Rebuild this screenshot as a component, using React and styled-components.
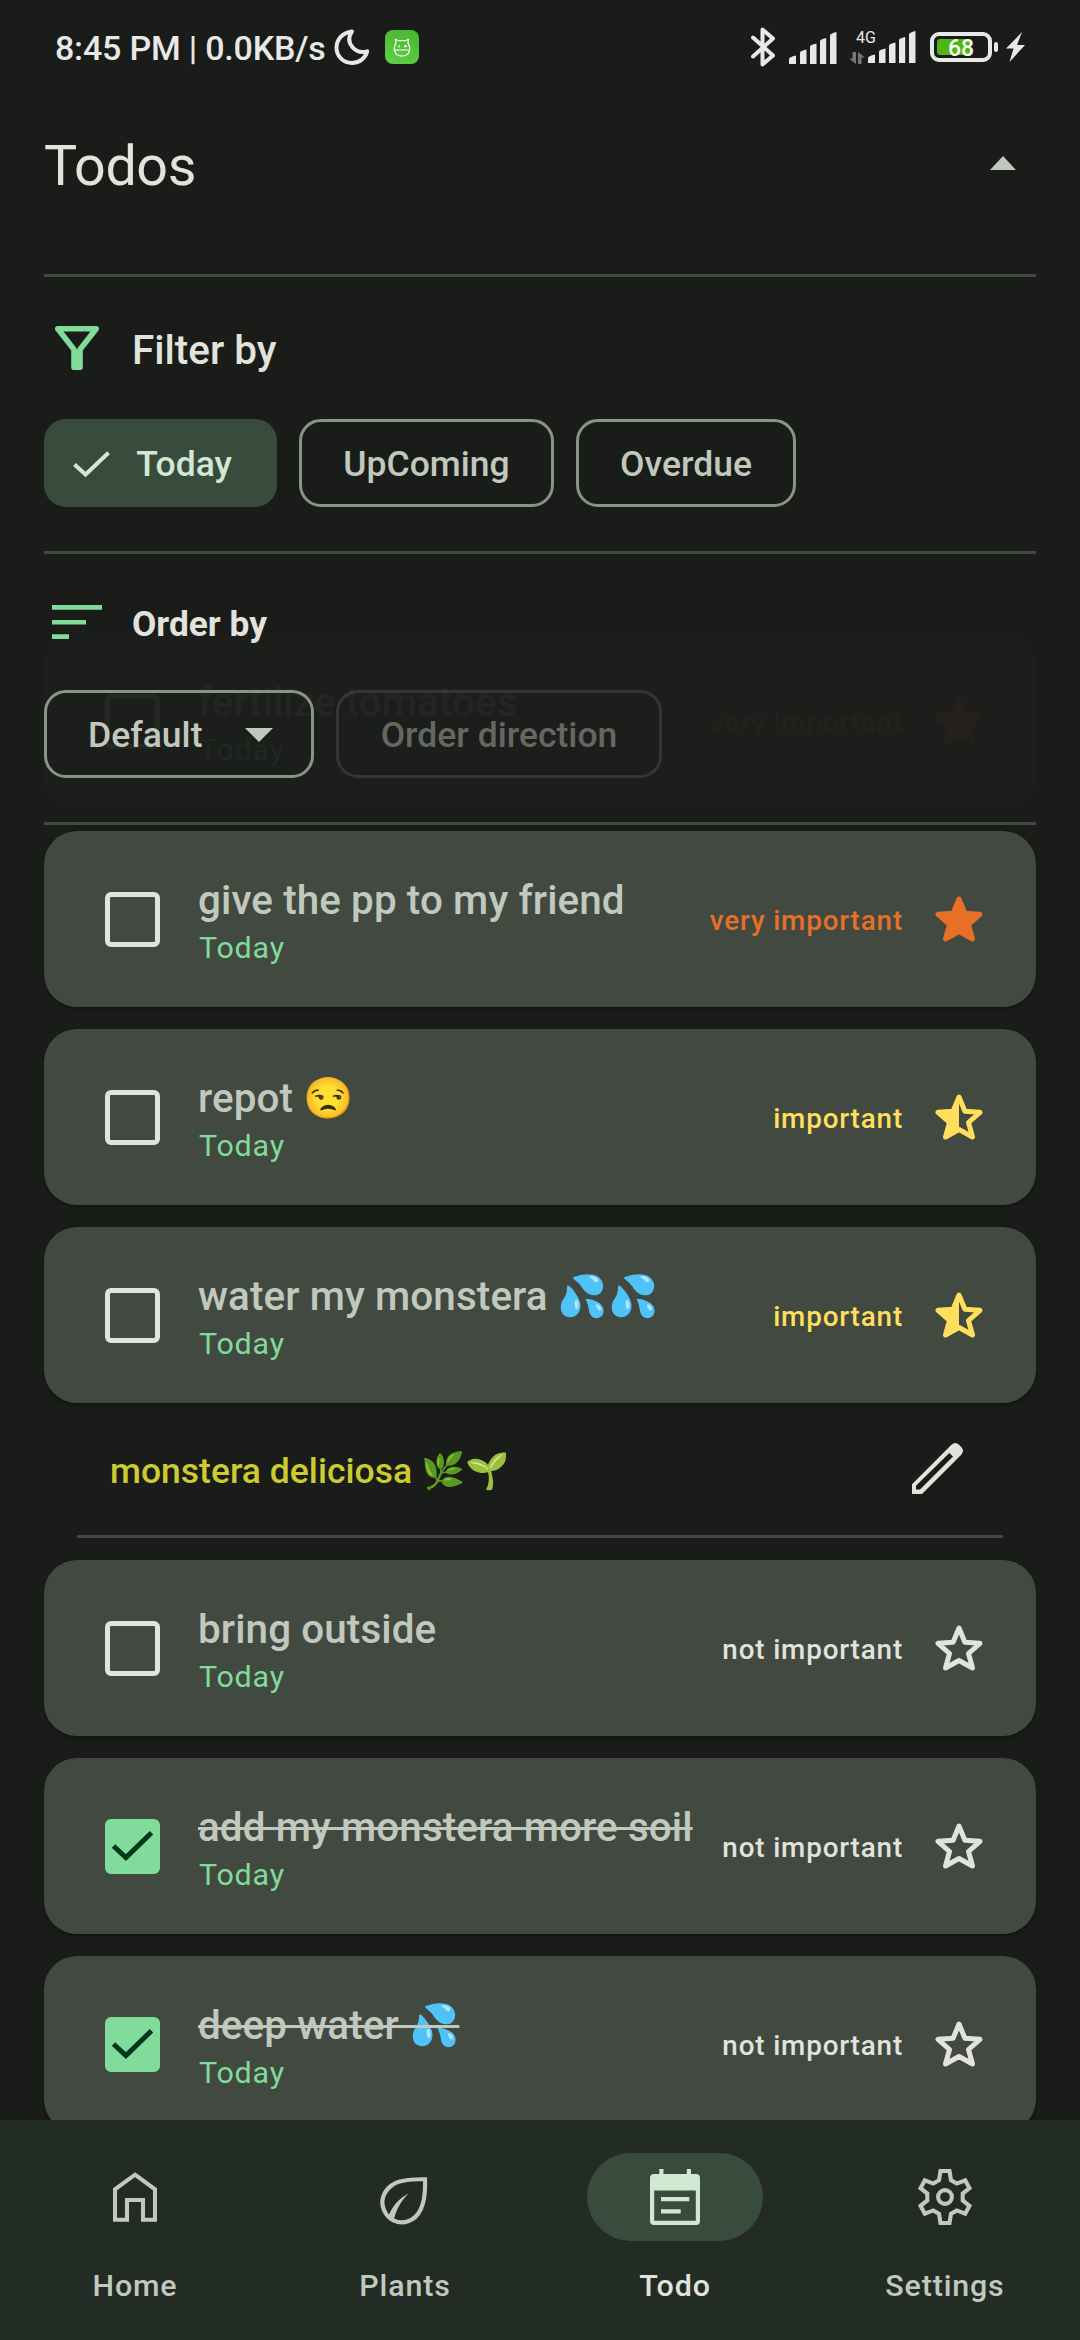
import React from "react";
import styled, { createGlobalStyle } from "styled-components";

const c = {
  bg: "#1a1c19",
  header: "rgba(26, 28, 25, 0.95)",
  text: "#e2e3dd",
  muted: "#c1c9be",
  card: "#424940",
  outline: "#8b9389",
  primary: "#81db9a",
  onPrimary: "#00391a",
  chip: "#394b3d",
  onChip: "#d1e8d3",
  nav: "#232b25",
  status: "#e8e8e8",
};

const GlobalStyle = createGlobalStyle`
  *, *::before, *::after { box-sizing: border-box; }
  html, body { margin: 0; background: ${c.bg}; }
  body { font-family: Roboto, "Noto Color Emoji", sans-serif; }
  svg { display: block; flex: none; }
`;

const Screen = styled.div`
  width: 1080px;
  height: 2340px;
  overflow: hidden;
  background: ${c.bg};
  color: ${c.text};
  display: grid;
  grid-template-rows: 2120px 220px;
`;

const Stage = styled.main`
  display: grid;
  grid-template: 100% / 100%;
  overflow: hidden;
`;

const List = styled.section`
  grid-area: 1 / 1;
  padding: 633px 44px 0;
  display: flex;
  flex-direction: column;
  gap: 22px;
`;

const Header = styled.header`
  grid-area: 1 / 1;
  align-self: start;
  height: 825px;
  z-index: 1;
  background: ${c.header};
  display: flex;
  flex-direction: column;
`;

/* Status bar */
const StatusBar = styled.div`
  height: 94px;
  padding: 0 55px;
  display: flex;
  align-items: center;
  justify-content: space-between;
`;

const StatusGroup = styled.div`
  display: flex;
  align-items: center;
`;

const Clock = styled.span`
  width: 279px;
  margin-top: 2px;
  font-size: 34px;
  line-height: 40px;
  font-weight: 500;
  letter-spacing: -0.2px;
  white-space: nowrap;
  color: ${c.status};
`;

const AppBadge = styled.span`
  width: 34px;
  height: 34px;
  margin-left: 15px;
  border-radius: 8px;
  background: linear-gradient(200deg, #46b52f, #62cf47);
  display: grid;
  place-items: center;
`;

const SignalSlot = styled.span`
  margin: 1px 0 0 14px;
`;

const MobileData = styled.div`
  width: 67px;
  height: 34px;
  margin-left: 12px;
  display: flex;
  justify-content: space-between;
  align-items: center;
`;

const NetworkType = styled.div`
  display: flex;
  flex-direction: column;
  align-items: flex-start;
  gap: 7px;
  width: 19px;
  font-size: 16px;
  line-height: 15px;
  color: ${c.status};
`;

const NetworkLabel = styled.span`
  padding-left: 7px;
`;

const Battery = styled.div`
  width: 62px;
  height: 30px;
  margin-left: 14px;
  border: 4px solid ${c.status};
  border-radius: 9px;
  padding: 3px;
  display: grid;
  grid-template-rows: 16px;
`;

const BatteryFill = styled.span`
  grid-area: 1 / 1;
  width: 34px;
  border-radius: 3px;
  background: #50b414;
`;

const BatteryLevel = styled.span`
  grid-area: 1 / 1;
  z-index: 1;
  height: 19px;
  display: flex;
  align-items: center;
  justify-content: center;
  font-size: 23px;
  line-height: 19px;
  font-weight: 500;
  color: #f4fff0;
`;

const BatteryNub = styled.span`
  width: 4px;
  height: 10px;
  margin: 0 8px 0 2px;
  border-radius: 2px;
  background: ${c.status};
`;

/* Header panel */
const TitleRow = styled.div`
  height: 180px;
  padding: 36px 64px 0 44px;
  display: flex;
  justify-content: space-between;
`;

const Title = styled.h1`
  margin: 0;
  font-size: 55.6px;
  line-height: 72px;
  font-weight: 400;
  letter-spacing: -0.4px;
`;

const TriangleUp = styled.span`
  width: 0;
  height: 0;
  margin-top: 26px;
  border: 13px solid transparent;
  border-top: 0;
  border-bottom: 14px solid ${c.muted};
`;

const TriangleDown = styled.span`
  width: 0;
  height: 0;
  border: 14px solid transparent;
  border-bottom: 0;
  border-top: 14px solid ${c.muted};
`;

const Divider = styled.hr`
  width: ${(p) => (p.$inset ? "926px" : "992px")};
  height: 3px;
  margin: 0 auto;
  border: 0;
  background: ${c.card};
  flex: none;
`;

const GroupHeading = styled.h2`
  margin: 0;
  height: ${(p) => p.$height};
  padding: 49px 44px 0 50px;
  display: grid;
  grid-template-columns: 54px auto;
  column-gap: 28px;
  justify-content: start;
  align-items: start;
  justify-items: center;
  font-size: ${(p) => p.$size};
  font-weight: ${(p) => p.$weight};
  line-height: ${(p) => p.$line};
`;

const Chips = styled.div`
  height: 132px;
  padding: 0 44px;
  display: flex;
  gap: 22px;
`;

const Chip = styled.button`
  width: ${(p) => p.$width};
  height: 88px;
  padding: ${(p) => p.$pad || "2px 0 0"};
  display: flex;
  align-items: center;
  justify-content: ${(p) => (p.$pad ? "space-between" : "center")};
  border-radius: 22px;
  border: 3px solid ${(p) => (p.$selected ? c.chip : p.disabled ? "rgba(226,227,221,0.12)" : c.outline)};
  background: ${(p) => (p.$selected ? c.chip : "transparent")};
  color: ${(p) => (p.$selected ? c.onChip : p.disabled ? "rgba(226,227,221,0.38)" : c.muted)};
  font: 500 35.5px/44px Roboto, sans-serif;
  white-space: nowrap;
`;

/* Todo cards */
const Card = styled.article`
  height: 176px;
  flex: none;
  padding: 0 53px 0 61px;
  border-radius: 33px;
  background: ${c.card};
  box-shadow: 0 2px 3px rgba(0, 0, 0, 0.3);
  display: flex;
  align-items: center;
`;

const Checkbox = styled.span`
  width: 55px;
  height: 55px;
  flex: none;
  border: 5px solid ${(p) => (p.$checked ? c.primary : c.text)};
  border-radius: 6px;
  background: ${(p) => (p.$checked ? c.primary : "transparent")};
  display: grid;
  place-items: center;
`;

const CardBody = styled.div`
  flex: 1;
  min-width: 0;
  height: 88px;
  margin: 4px 0 0 38px;
  display: flex;
  flex-direction: column;
  gap: 5px;
  white-space: nowrap;
`;

const CardTitle = styled.span`
  align-self: flex-start;
  height: 48px;
  font-size: 40.4px;
  line-height: 48px;
  font-weight: 500;
  letter-spacing: 0.1px;
  color: ${c.muted};
  text-decoration: ${(p) => (p.$done ? "line-through" : "none")};
  text-decoration-thickness: 3px;
`;

const DueDate = styled.span`
  padding-left: 1px;
  font-size: 30.4px;
  line-height: 36px;
  letter-spacing: 0.8px;
  color: ${c.primary};
`;

const Priority = styled.span`
  display: flex;
  align-items: center;
  gap: 32px;
  font-size: 27.8px;
  line-height: 34px;
  font-weight: 500;
  letter-spacing: 0.85px;
  white-space: nowrap;
  color: ${(p) => p.$color};
`;

const PriorityLabel = styled.span`
  padding-top: 3px;
`;

const PlantSection = styled.div`
  height: 135px;
  margin-top: -22px;
  flex: none;
  display: flex;
  flex-direction: column;
  justify-content: space-between;
`;

const PlantRow = styled.div`
  padding: 40px 73px 0 66px;
  display: flex;
  justify-content: space-between;
  align-items: flex-start;
`;

const PlantName = styled.h3`
  margin: 6px 0 0;
  height: 44px;
  font-size: 35.5px;
  line-height: 44px;
  font-weight: 500;
  color: #cccb2f;
`;

/* Bottom navigation */
const Nav = styled.nav`
  background: ${c.nav};
  display: grid;
  grid-template-columns: repeat(4, 270px);
`;

const NavItem = styled.a`
  padding-top: 33px;
  display: flex;
  flex-direction: column;
  align-items: center;
  gap: 27px;
  font-size: 30.4px;
  line-height: 36px;
  font-weight: 500;
  letter-spacing: 0.85px;
  color: ${(p) => (p.$active ? c.text : c.muted)};
`;

const NavPill = styled.span`
  width: 176px;
  height: 88px;
  border-radius: 44px;
  background: ${(p) => (p.$active ? c.chip : "transparent")};
  color: ${(p) => (p.$active ? c.onChip : c.muted)};
  display: grid;
  place-items: center;
`;

/* Icons */
const Moon = () => (
  <svg width="36" height="36" viewBox="0 0 36 36" fill="none" stroke={c.status} strokeWidth="4" strokeLinejoin="round">
    <path d="M18 2.4C8.500 3.500 2.500 10.500 2.500 18.800C2.500 27.500 9.500 34 18 34C25.500 34 31.500 29 33.200 22.300C27.500 24 22 22.300 18.300 18C14.400 13.300 14.400 7.500 18 2.400Z" />
  </svg>
);

const Critter = () => (
  <svg width="18" height="19" viewBox="0 0 18 19" fill="none" stroke="#fff" strokeWidth="1.2">
    <path d="M3 5.500L2.500 1.500L6 2.700H12L15.500 1.500L15 5.500C18 9 17.500 18 9 18C.5 18 0 9 3 5.500ZM1 12H17M6 7V9.500M11 8.200H14M12.500 7V9.500" />
  </svg>
);

const Bluetooth = () => (
  <svg width="24" height="40" viewBox="0 0 24 40" fill="none" stroke={c.status} strokeWidth="4" strokeLinejoin="round" strokeLinecap="round">
    <path d="M2 10.500L22 28.500L11.500 37.500V2.500L22 11.500L2 29.500" />
  </svg>
);

const Bars = () => (
  <svg width="48" height="32" viewBox="0 0 48 32" fill={c.status}>
    <path d="M0 27Q0 25 7 23.500V32H0ZM11 20.500Q11 19 17.500 17.500V32H11ZM21 14.500Q21 13 27.500 11.500V32H21ZM31 9Q31 7.500 37.200 6V32H31ZM41 3.500Q41 1.500 47.500 0V32H41Z" />
  </svg>
);

const DataArrows = () => (
  <svg width="16" height="12" viewBox="0 0 16 12" fill="#777">
    <path d="M3.500 0H7V12L0 6.500H3.500ZM9 0L16 5.500H12.500V12H9Z" />
  </svg>
);

const Bolt = () => (
  <svg width="19" height="30" viewBox="0 0 19 30" fill={c.status}>
    <path d="M16 0L0 16.500H7.500L3.500 30L19 13H11Z" />
  </svg>
);

const Funnel = () => (
  <svg width="44" height="44" viewBox="0 0 44 44" fill="none" stroke={c.primary} strokeWidth="5.600" strokeLinejoin="round">
    <path d="M2.800 2.800H41.200L25 23.500V41.200H19V23.500Z" />
    <path d="M22 24V41" />
  </svg>
);

const SortLines = () => (
  <svg width="50" height="38" viewBox="0 0 50 38" fill={c.primary}>
    <path d="M0 2H50V6.700H0ZM0 17H34V21.500H0ZM0 31.300H17V36H0Z" />
  </svg>
);

const Check = ({ width, height, color, stroke }) => (
  <svg width={width} height={height} viewBox={`0 0 ${width} ${height}`} fill="none" stroke={color} strokeWidth={stroke}>
    <path d={`M1.500 ${height * 0.5}L${width * 0.34} ${height - 3.5}L${width - 1.5} 1.800`} />
  </svg>
);

const STAR = "M24 3L29.900 17.200L45 18.300L33.500 28.500L37.500 43L24 35.500L10.500 43L14.500 28.500L3 18.300L18.100 17.200Z";

const Star = ({ kind }) => (
  <svg width="48" height="46" viewBox="0 0 48 46" fill={kind === "full" ? "currentColor" : "none"} stroke="currentColor" strokeWidth="5" strokeLinejoin="round">
    <path d={STAR} />
    {kind === "half" && <path d="M24 3V35.500L10.500 43L14.500 28.500L3 18.300L18.100 17.200Z" fill="currentColor" stroke="none" />}
  </svg>
);

const Pencil = () => (
  <svg width="51" height="51" viewBox="0 0 51 50" preserveAspectRatio="none" fill={c.text} fillRule="evenodd">
    <path d="M0 50V40.500L39.500 1.600Q43.300 -1.500 47 1.600L49.500 4.200Q52.500 7.500 49.500 11.200L10 50ZM4 45.500H8L41 13.300L37.300 9.700L4 42Z" />
  </svg>
);

const Home = () => (
  <svg width="44" height="50" viewBox="0 0 44 50" fill="none" stroke="currentColor" strokeWidth="4.100">
    <path d="M22 2.700L42 17.300V47.700H30V28H14V47.700H2V17.300Z" />
  </svg>
);

const LeafSlot = styled.span`
  padding: 7px 0 0 0;
  margin-right: 2px;
`;

const Leaf = () => (
  <LeafSlot>
    <svg width="48" height="48" viewBox="0 0 48 48" fill="none" stroke="currentColor" strokeWidth="4.200">
      <path d="M45 2.300C30 2 18 3.200 11.500 8.500C2.500 15.500 .3 25 4.200 33.500C8.300 43 18.500 47.500 28 44.300C40.500 40 46 26 45 2.300Z" />
      <path d="M8 40.500C12 29 19 21.500 28.500 16.500C20.500 24.500 16 33 13.500 44Z" fill="currentColor" stroke="none" />
    </svg>
  </LeafSlot>
);

const Calendar = () => (
  <svg width="50" height="56" viewBox="0 0 50 56" fill="currentColor" fillRule="evenodd">
    <path d="M9.300 0H13.500V5H36.800V0H41V5H46Q50 5 50 9V52Q50 56 46 56H4Q0 56 0 52V9Q0 5 4 5H9.300ZM4.200 21.500V51.800H45.800V21.500ZM11 28H39.300V32.200H11ZM11 40.300H30.700V44.500H11Z" />
  </svg>
);

const Gear = () => (
  <svg width="54" height="56" viewBox="0 0 54 56" fill="none" stroke="currentColor" strokeWidth="4.100">
    <path d="M22.500 2H31.500L33 11.300L38.800 14.600L47.200 11.300L51.500 19.200L44.700 24.600V31.400L51.500 36.800L47.200 44.700L38.800 41.400L33 44.700L31.500 54H22.500L21 44.700L15.200 41.400L6.800 44.700L2.500 36.800L9.300 31.400V24.600L2.500 19.200L6.800 11.300L15.200 14.600L21 11.300Z" />
    <circle cx="27" cy="28" r="6.900" />
  </svg>
);

const PRIORITIES = {
  high: { label: "very important", color: "#e77028", star: "full" },
  medium: { label: "important", color: "#ffdf5b", star: "half" },
  low: { label: "not important", color: c.text, star: "outline" },
};

function TodoCard({ title, priority, done }) {
  const p = PRIORITIES[priority];
  return (
    <Card>
      <Checkbox $checked={done}>
        {done && <Check width={41} height={30} color={c.onPrimary} stroke={5} />}
      </Checkbox>
      <CardBody>
        <CardTitle $done={done}>{title}</CardTitle>
        <DueDate>Today</DueDate>
      </CardBody>
      <Priority $color={p.color}>
        <PriorityLabel>{p.label}</PriorityLabel>
        <Star kind={p.star} />
      </Priority>
    </Card>
  );
}

const GENERAL_TODOS = [
  { title: "fertilize tomatoes", priority: "high" },
  { title: "give the pp to my friend", priority: "high" },
  { title: "repot 😒", priority: "medium" },
  { title: "water my monstera 💦💦", priority: "medium" },
];

const PLANT_TODOS = [
  { title: "bring outside", priority: "low" },
  { title: "add my monstera more soil", priority: "low", done: true },
  { title: "deep water 💦", priority: "low", done: true },
];

const TABS = [
  { label: "Home", Icon: Home },
  { label: "Plants", Icon: Leaf },
  { label: "Todo", Icon: Calendar, active: true },
  { label: "Settings", Icon: Gear },
];

export default function App() {
  return (
    <>
      <GlobalStyle />
      <Screen>
        <Stage>
          <Header>
            <StatusBar>
              <StatusGroup>
                <Clock>8:45 PM | 0.0KB/s</Clock>
                <Moon />
                <AppBadge>
                  <Critter />
                </AppBadge>
              </StatusGroup>
              <StatusGroup>
                <Bluetooth />
                <SignalSlot>
                  <Bars />
                </SignalSlot>
                <MobileData>
                  <NetworkType>
                    <NetworkLabel>4G</NetworkLabel>
                    <DataArrows />
                  </NetworkType>
                  <Bars />
                </MobileData>
                <Battery>
                  <BatteryFill />
                  <BatteryLevel>68</BatteryLevel>
                </Battery>
                <BatteryNub />
                <Bolt />
              </StatusGroup>
            </StatusBar>
            <TitleRow>
              <Title>Todos</Title>
              <TriangleUp />
            </TitleRow>
            <Divider />
            <GroupHeading $height="142px" $size="40.4px" $weight={500} $line="50px">
              <Funnel />
              Filter by
            </GroupHeading>
            <Chips>
              <Chip $selected $width="233px" $pad="2px 42px 0 26px">
                <Check width={37} height={27} color={c.onChip} stroke={4} />
                Today
              </Chip>
              <Chip $width="255px">UpComing</Chip>
              <Chip $width="220px">Overdue</Chip>
            </Chips>
            <Divider />
            <GroupHeading $height="136px" $size="35.3px" $weight={700} $line="42px">
              <SortLines />
              Order by
            </GroupHeading>
            <Chips>
              <Chip $width="270px" $pad="2px 38px 0 41px">
                Default
                <TriangleDown />
              </Chip>
              <Chip $width="326px" disabled>
                Order direction
              </Chip>
            </Chips>
            <Divider />
          </Header>
          <List>
            {GENERAL_TODOS.map((t) => (
              <TodoCard key={t.title} {...t} />
            ))}
            <PlantSection>
              <PlantRow>
                <PlantName>monstera deliciosa 🌿🌱</PlantName>
                <Pencil />
              </PlantRow>
              <Divider $inset />
            </PlantSection>
            {PLANT_TODOS.map((t) => (
              <TodoCard key={t.title} {...t} />
            ))}
          </List>
        </Stage>
        <Nav>
          {TABS.map(({ label, Icon, active }) => (
            <NavItem key={label} $active={active}>
              <NavPill $active={active}>
                <Icon />
              </NavPill>
              {label}
            </NavItem>
          ))}
        </Nav>
      </Screen>
    </>
  );
}
